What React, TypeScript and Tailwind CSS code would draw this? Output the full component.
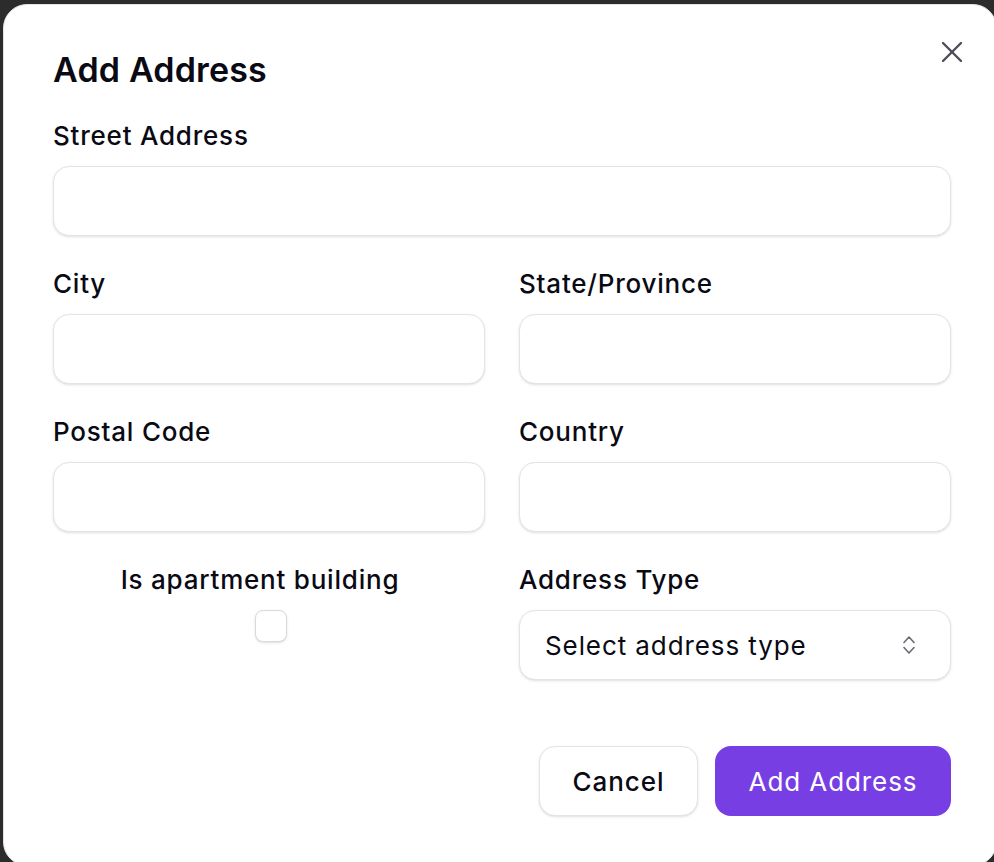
import { X } from "lucide-react";

const Field = ({ label }: { label: string }) => (
  <div className="flex flex-col gap-4">
    <label className="h-8 text-[26px] leading-[35px] font-medium tracking-[0.03em] text-[#0a0a14]">{label}</label>
    <input
      type="text"
      className="h-[70px] w-full rounded-2xl border-[1.5px] border-[#e4e4e7] bg-white px-[26px] text-[26px] shadow-sm outline-none"
    />
  </div>
);

const UpDownIcon = () => (
  <svg width="12" height="20" viewBox="0 0 12 20" fill="none" stroke="#6b6b75" strokeWidth="1.6" strokeLinecap="round" strokeLinejoin="round">
    <path d="M1 7.5 L6 2 L11 7.5" />
    <path d="M1 12.5 L6 18 L11 12.5" />
  </svg>
);

export default function App() {
  return (
    <div className="h-[862px] w-[994px] overflow-hidden bg-[#2c2c2c] pl-[3px] pt-[4px]" style={{ fontFamily: "Inter, 'Noto Sans', sans-serif" }}>
      <div className="relative h-[862px] w-[994px] rounded-[24px] border border-[#e4e4e7] bg-white px-[49px] pt-[45px] text-[#0a0a14]">
        <button className="absolute right-[26px] top-[29px] text-[#4a4a55]" aria-label="Close">
          <X size={36} strokeWidth={1.5} />
        </button>

        <h2 className="h-10 text-[34px] leading-10 font-semibold tracking-[0.005em]">Add Address</h2>

        <div className="mt-[28px] w-[898px]">
          <Field label="Street Address" />

          <div className="mt-[30px] grid grid-cols-2 gap-x-[34px] gap-y-[30px]">
            <Field label="City" />
            <Field label="State/Province" />
            <Field label="Postal Code" />
            <Field label="Country" />

            <div className="flex flex-col items-center gap-4">
              <span className="h-8 pr-[18px] text-[26px] leading-[35px] font-medium tracking-[0.03em]">Is apartment building</span>
              <div className="ml-[4px] h-8 w-8 rounded-lg border-[1.5px] border-[#d9d9de] bg-white shadow-sm" />
            </div>

            <div className="flex flex-col gap-4">
              <span className="h-8 text-[26px] leading-[35px] font-medium tracking-[0.03em]">Address Type</span>
              <button className="flex h-[70px] w-full items-center justify-between rounded-2xl border-[1.5px] border-[#e4e4e7] bg-white pl-[25px] pr-[35px] text-[26px] tracking-[0.035em] shadow-sm">
                <span>Select address type</span>
                <UpDownIcon />
              </button>
            </div>
          </div>

          <div className="mt-[66px] flex justify-end gap-[17px]">
            <button className="h-[70px] w-[159px] rounded-2xl border-[1.5px] border-[#e4e4e7] bg-white text-[26px] font-medium tracking-[0.035em] shadow-sm">
              Cancel
            </button>
            <button className="h-[70px] w-[236px] rounded-2xl bg-[#773fe3] text-[26px] tracking-[0.035em] text-white">
              Add Address
            </button>
          </div>
        </div>
      </div>
    </div>
  );
}
